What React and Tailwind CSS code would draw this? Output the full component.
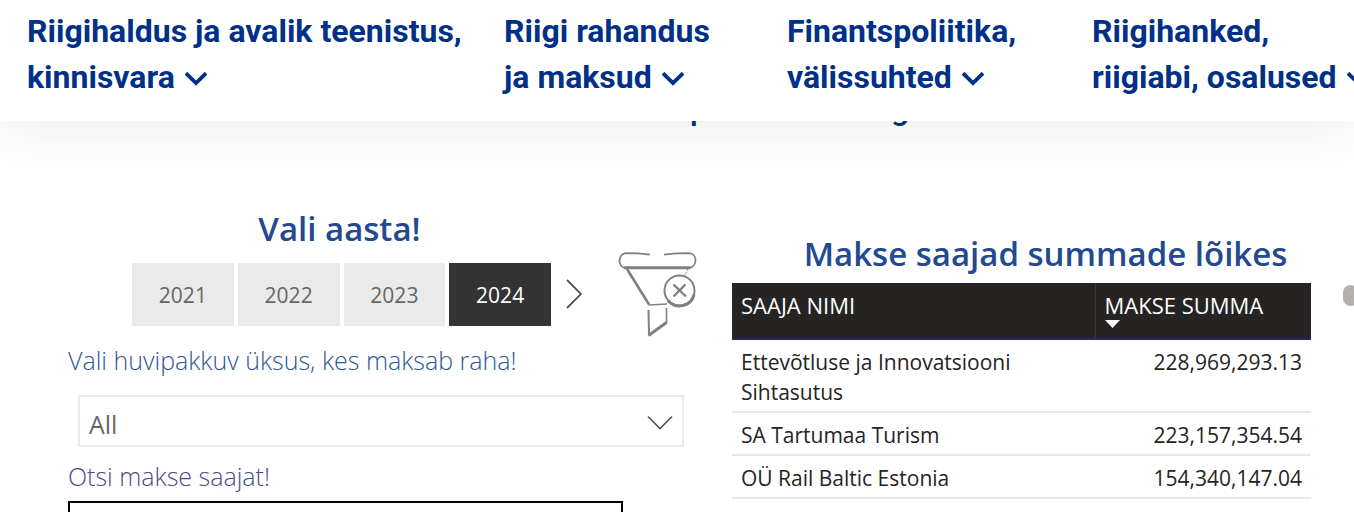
import { useState } from "react";

const menu = [
  { first: "Riigihaldus ja avalik teenistus,", second: "kinnisvara" },
  { first: "Riigi rahandus", second: "ja maksud" },
  { first: "Finantspoliitika,", second: "välissuhted" },
  { first: "Riigihanked,", second: "riigiabi, osalused" },
];

const years = ["2021", "2022", "2023", "2024"];

const payments = [
  { name: "Ettevõtluse ja Innovatsiooni Sihtasutus", sum: "228,969,293.13" },
  { name: "SA Tartumaa Turism", sum: "223,157,354.54" },
  { name: "OÜ Rail Baltic Estonia", sum: "154,340,147.04" },
];

function MenuArrow() {
  return (
    <svg className="inline-block w-[22px] h-4 ml-[10px]" viewBox="0 0 22 16" fill="none" stroke="currentColor" strokeWidth="3.8">
      <path d="M1 1.200 11 11 21 1.200" />
    </svg>
  );
}

function FunnelIcon() {
  return (
    <svg className="w-20 h-[88px]" viewBox="0 0 80 88" fill="none" stroke="#808080">
      <path d="M32 3.600Q20 2.200 9 2.200C-.5 2.500-.5 15 6.500 17" strokeWidth="1.800" />
      <path d="M46 3.600Q58 2.200 71 2.200C80 2.500 79.500 16 71 17" strokeWidth="1.800" />
      <path d="M6 16.700H72" strokeWidth="3" />
      <path d="M9 18 31 53.500" strokeWidth="2.600" />
      <path d="M30.500 54 49 53" strokeWidth="1.600" />
      <path d="M70 18 66.500 25" strokeWidth="1" strokeDasharray="2 1" />
      <path d="M30.500 59 31 84.500" strokeWidth="2" />
      <path d="M30.500 84.500 48.500 71.500" strokeWidth="3" />
      <path d="M48.500 72V57" strokeWidth="1.600" />
      <circle cx="61.500" cy="39.500" r="15" strokeWidth="2" />
      <path d="M50 49.500A15 15 0 0 0 76 44" strokeWidth="3" />
      <path d="M55.500 33.500 68 45.500M67.500 33.500 55.500 45.500" strokeWidth="2.400" />
    </svg>
  );
}

function Header() {
  return (
    <header className="relative z-10 h-[121px] bg-white shadow-[0_16px_40px_rgba(0,0,0,0.06)]">
      <nav className="grid grid-cols-[477px_283px_305px_1fr] pl-[27px] pt-2 text-[32px] leading-[46px] font-bold text-[#003087] font-['Roboto',sans-serif]">
        {menu.map((item) => (
          <button key={item.first} type="button" className="text-left whitespace-nowrap">
            {item.first}
            <br />
            {item.second}
            <MenuArrow />
          </button>
        ))}
      </nav>
    </header>
  );
}

function Filters() {
  const [year, setYear] = useState("2024");
  const [search, setSearch] = useState("");

  return (
    <section className="pt-[17px]">
      <div className="flex">
        <div className="w-[419px] ml-16">
          <h2 className="h-[56px] pr-1 text-center text-[33px] leading-[44px] font-semibold text-[#234990]">Vali aasta!</h2>
          <div className="grid grid-cols-4 gap-1">
            {years.map((y) => (
              <button
                key={y}
                type="button"
                onClick={() => setYear(y)}
                className={
                  y === year
                    ? "h-[63px] pt-0.5 text-[21px] bg-[#333333] text-white"
                    : "h-[63px] pt-0.5 text-[21px] bg-[#eaeaea] text-[#666666]"
                }
              >
                {y}
              </button>
            ))}
          </div>
        </div>
        <button type="button" aria-label="Järgmised aastad" className="mt-[55px] ml-[15px] h-[63px]">
          <svg className="w-4 h-[30px]" viewBox="0 0 16 30" fill="none" stroke="#555555" strokeWidth="1.800">
            <path d="M1 1 15 15 1 29" />
          </svg>
        </button>
        <button type="button" aria-label="Tühista filtrid" className="mt-11 ml-9 h-[88px]">
          <FunnelIcon />
        </button>
      </div>

      <label htmlFor="unit" className="block mt-1 text-[25px] leading-[34px] font-light text-[#2f5597]">
        Vali huvipakkuv üksus, kes maksab raha!
      </label>
      <div className="relative mt-[18px] ml-[10px] mr-4">
        <select id="unit" className="block w-full h-[52px] pl-[9px] pt-2 appearance-none border-2 border-[#eaeaea] bg-white text-[25px] text-[#666666]">
          <option>All</option>
        </select>
        <svg className="absolute right-[11px] top-5 w-[26px] h-4 pointer-events-none" viewBox="0 0 26 16" fill="none" stroke="#555555" strokeWidth="1.600">
          <path d="M1 1.500 13 13.500 25 1.500" />
        </svg>
      </div>
      <label htmlFor="search" className="block mt-3 text-[25px] leading-[34px] font-light text-[#4a4a8c]">
        Otsi makse saajat!
      </label>
      <input
        id="search"
        type="text"
        value={search}
        onChange={(e) => setSearch(e.target.value)}
        className="block mt-2 w-[555px] h-12 px-3 border-2 border-black bg-white text-[21px]"
      />
    </section>
  );
}

function Payments() {
  return (
    <section className="pt-[42px]">
      <h2 className="h-[51px] pl-12 text-center whitespace-nowrap text-[33px] leading-[44px] font-semibold text-[#234990]">
        Makse saajad summade lõikes
      </h2>
      <table className="w-full table-fixed text-[21px] leading-[30px] text-[#252423]">
        <thead className="bg-[#252423] text-[22px] text-white">
          <tr className="h-[56px] align-top text-left border-b-2 border-[#2b2168]">
            <th className="w-[363px] pt-[7px] px-[9px] font-normal border-r border-[#3b3a39]">SAAJA NIMI</th>
            <th className="pt-[7px] px-[9px] font-normal">
              MAKSE SUMMA
              <svg className="w-4 h-2" viewBox="0 0 16 8" fill="#ffffff">
                <path d="M0 0H15L7.500 8Z" />
              </svg>
            </th>
          </tr>
        </thead>
        <tbody>
          {payments.map((p) => (
            <tr key={p.name} className="align-top border-b-2 border-[#e6e6e6]">
              <td className="pl-[9px] pr-16 pt-[7px] pb-1">{p.name}</td>
              <td className="px-[9px] pt-[7px] pb-1 text-right">{p.sum}</td>
            </tr>
          ))}
        </tbody>
      </table>
    </section>
  );
}

export default function App() {
  return (
    <div className="relative h-screen overflow-hidden bg-white font-['Open_Sans','Noto_Sans',sans-serif]">
      <Header />
      {/* page title, scrolled under the header */}
      <h1 className="flex -mt-8 h-10 pl-[690px] gap-[183px] text-[32px] leading-10 font-medium text-[#003087] font-['Roboto',sans-serif]">
        <span>p</span>
        <span>g</span>
      </h1>
      <main className="grid grid-cols-[632px_1fr] gap-8 pl-[68px] pr-[43px] pt-[61px]">
        <Filters />
        <Payments />
      </main>
      {/* report scrollbar */}
      <div className="absolute top-[285px] -right-1 w-[15px] h-[21px] rounded-full bg-[#b3b0ad]" />
    </div>
  );
}
